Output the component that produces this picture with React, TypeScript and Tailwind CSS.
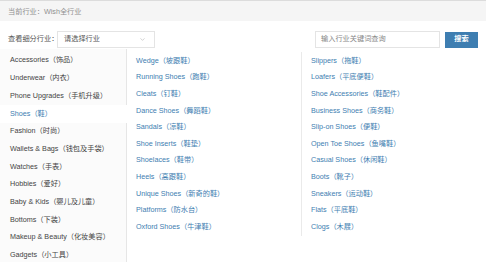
import { ChevronDown } from 'lucide-react'

const industries = [
  'Accessories（饰品）',
  'Underwear（内衣）',
  'Phone Upgrades（手机升级）',
  'Shoes（鞋）',
  'Fashion（时尚）',
  'Wallets & Bags（钱包及手袋）',
  'Watches（手表）',
  'Hobbies（爱好）',
  'Baby & Kids（婴儿及儿童）',
  'Bottoms（下装）',
  'Makeup & Beauty（化妆美容）',
  'Gadgets（小工具）',
]

const leftLinks = [
  'Wedge（坡跟鞋）',
  'Running Shoes（跑鞋）',
  'Cleats（钉鞋）',
  'Dance Shoes（舞蹈鞋）',
  'Sandals（凉鞋）',
  'Shoe Inserts（鞋垫）',
  'Shoelaces（鞋带）',
  'Heels（高跟鞋）',
  'Unique Shoes（新奇的鞋）',
  'Platforms（防水台）',
  'Oxford Shoes（牛津鞋）',
]

const rightLinks = [
  'Slippers（拖鞋）',
  'Loafers（平底便鞋）',
  'Shoe Accessories（鞋配件）',
  'Business Shoes（商务鞋）',
  'Slip-on Shoes（便鞋）',
  'Open Toe Shoes（鱼嘴鞋）',
  'Casual Shoes（休闲鞋）',
  'Boots（靴子）',
  'Sneakers（运动鞋）',
  'Flats（平底鞋）',
  'Clogs（木屐）',
]

const selected = 'Shoes（鞋）'

export default function App() {
  return (
    <div className="w-[486px] h-[262px] overflow-hidden bg-white text-[7.2px] whitespace-nowrap font-['Liberation_Sans','Noto_Sans_CJK_SC',sans-serif]">
      {/* current industry */}
      <div className="h-[21px] bg-[#f5f5f5] border-t border-[#dcdcdc] pl-2 pt-[2px] flex items-center text-[#8f8f8f]">
        当前行业：Wish全行业
      </div>

      {/* filter row */}
      <div className="mt-[10px] h-[17px] flex items-center justify-between pl-2 pr-2">
        <div className="flex items-center">
          <span className="text-[#555] w-[49px] shrink-0">查看细分行业：</span>
          <div className="w-[98px] h-[17px] border border-[#e4e4e4] flex items-center justify-between pl-[6px] pr-[8px] text-[#555]">
            <span>请选择行业</span>
            <ChevronDown className="w-[7px] h-[7px] text-[#999]" strokeWidth={1.5} />
          </div>
        </div>
        <div className="flex items-center gap-[5px]">
          <div className="w-[125px] h-[17px] border border-[#e4e4e4] flex items-center pl-[5px] text-[#888]">
            输入行业关键词查询
          </div>
          <button className="w-[33px] h-[16px] bg-[#3e7eb1] text-white font-bold flex items-center justify-center">
            搜索
          </button>
        </div>
      </div>

      {/* main */}
      <div className="flex mt-[1px]">
        <div className="w-[127px] shrink-0 bg-[#fbfbfb] border-r border-[#e6e6e6] pt-[3px]">
          {industries.map(name => (
            <div
              key={name}
              className={
                name === selected
                  ? 'h-[17.7px] flex items-center pl-[10px] bg-white text-[#3e7eb1] -mr-px'
                  : 'h-[17.7px] flex items-center pl-[10px] text-[#444]'
              }
            >
              {name}
            </div>
          ))}
        </div>
        <div className="flex flex-1 items-start pt-[3px]">
          <div className="w-[175px] border-r border-[#eaeaea] pt-px">
            {leftLinks.map(name => (
              <div key={name} className="h-[16.6px] flex items-center pl-[9px] text-[#3e7eb1]">
                {name}
              </div>
            ))}
          </div>
          <div className="flex-1 pt-px">
            {rightLinks.map(name => (
              <div key={name} className="h-[16.6px] flex items-center pl-[9px] text-[#3e7eb1]">
                {name}
              </div>
            ))}
          </div>
        </div>
      </div>
    </div>
  )
}
